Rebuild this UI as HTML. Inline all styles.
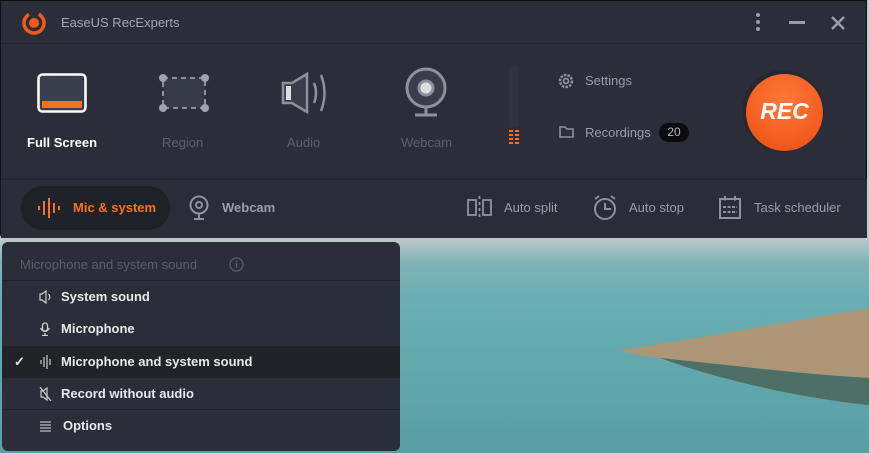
<!DOCTYPE html>
<html><head><meta charset="utf-8"><style>
*{margin:0;padding:0;box-sizing:border-box}
body{width:869px;height:453px;overflow:hidden;position:relative;font-family:"Liberation Sans",sans-serif;background:#5fa0a6}
.bg{position:absolute;left:0;top:0;width:869px;height:453px;background:linear-gradient(180deg,#c9cccd 0px,#c4c8c9 238px,#a9c2c4 246px,#7fb3b8 262px,#6aaeb2 300px,#63a8ad 360px,#5a9ea4 453px)}
.win{position:absolute;left:0;top:0;width:867px;height:238px;background:#2b2e39;border:1px solid #111;border-radius:0 0 4px 4px}
.t{position:absolute;white-space:nowrap}
.menu{position:absolute;left:2px;top:242px;width:398px;height:209px;background:#2b2e39;border-radius:6px;overflow:hidden}
.mi{position:absolute;left:0;width:398px;height:32px;color:#e8e9ec;font-size:13px;font-weight:bold;line-height:32px}
</style></head><body>
<div class="bg"></div>
<svg style="position:absolute;left:600px;top:300px" width="269" height="120"><path d="M20 50 C90 40 170 25 269 8 L269 78 C200 74 120 64 60 58 C40 55 25 53 20 50Z" fill="#ad9676"/><path d="M60 58 C120 64 200 74 269 78 L269 105 C200 98 120 80 60 58Z" fill="#4d6f66"/></svg>
<div class="win">
 <div style="position:absolute;left:0;top:42px;width:866px;height:1px;background:#22242c"></div>
 <div style="position:absolute;left:0;top:177px;width:866px;height:60px;background:#2a2d37;border-top:2px solid #24262f"></div>
 <svg style="position:absolute;left:20px;top:10px" width="26" height="24"><circle cx="13" cy="12" r="10" fill="none" stroke="#f25a1d" stroke-width="3.5" stroke-dasharray="52 10" transform="rotate(-60 13 12)"/><circle cx="13" cy="12" r="5" fill="#f25a1d"/></svg>
 <div class="t" style="left:60px;top:14px;color:#a3a6b0;font-size:13px">EaseUS RecExperts</div>
 <svg style="position:absolute;left:750px;top:12px" width="100" height="20"><g fill="#9a9da8"><circle cx="7" cy="2" r="2"/><circle cx="7" cy="9" r="2"/><circle cx="7" cy="16" r="2"/><rect x="38" y="8" width="16" height="3"/></g><path d="M81 4 L93 16 M93 4 L81 16" stroke="#9a9da8" stroke-width="2.5"/></svg>
 <svg style="position:absolute;left:36px;top:72px" width="51" height="40"><rect x="1.5" y="1.5" width="47" height="37" rx="4" fill="#3a3d4a" stroke="#fff" stroke-width="2.5"/><rect x="5" y="28" width="40" height="7" fill="#f5731e"/></svg>
 <div class="t" style="left:26px;top:134px;color:#fff;font-size:13px;font-weight:bold">Full Screen</div>
 <svg style="position:absolute;left:156px;top:71px" width="54" height="42"><rect x="6" y="6" width="42" height="30" fill="#363947" stroke="#8e909c" stroke-width="2" stroke-dasharray="5 4"/><g fill="#a0a2ad"><circle cx="6" cy="6" r="4"/><circle cx="48" cy="6" r="4"/><circle cx="6" cy="36" r="4"/><circle cx="48" cy="36" r="4"/></g></svg>
 <div class="t" style="left:161px;top:134px;color:#5d606c;font-size:13px">Region</div>
 <svg style="position:absolute;left:279px;top:70px" width="52" height="44"><path d="M3 12 H12 L27 3 V41 L12 32 H3Z" fill="#3a3d4a" stroke="#8e909c" stroke-width="2.5"/><rect x="6" y="15" width="5" height="14" fill="#ddd"/><path d="M34 12 Q38 22 34 32" fill="none" stroke="#8e909c" stroke-width="2.5"/><path d="M41 4 Q48 22 41 40" fill="none" stroke="#8e909c" stroke-width="2.5"/></svg>
 <div class="t" style="left:286px;top:134px;color:#5d606c;font-size:13px">Audio</div>
 <svg style="position:absolute;left:403px;top:66px" width="44" height="50"><circle cx="22" cy="21" r="19" fill="#3a3d4a" stroke="#8e909c" stroke-width="3"/><circle cx="22" cy="21" r="7" fill="#ddd" stroke="#8e909c" stroke-width="3"/><path d="M22 40 V48 M11 48 H33" stroke="#8e909c" stroke-width="3"/></svg>
 <div class="t" style="left:400px;top:134px;color:#5d606c;font-size:13px">Webcam</div>
 <svg style="position:absolute;left:507px;top:66px" width="12" height="80"><g fill="#30333d"><rect x="1" y="0" width="10" height="60"/></g><g fill="#f5731e"><rect x="1" y="63" width="4" height="2"/><rect x="7" y="63" width="4" height="2"/><rect x="1" y="67" width="4" height="2"/><rect x="7" y="67" width="4" height="2"/><rect x="1" y="71" width="4" height="2"/><rect x="7" y="71" width="4" height="2"/><rect x="1" y="75" width="4" height="2"/><rect x="7" y="75" width="4" height="2"/></g></svg>
 <svg style="position:absolute;left:557px;top:72px" width="16" height="16"><circle cx="8" cy="8" r="6" fill="none" stroke="#8e909c" stroke-width="2.5" stroke-dasharray="2.5 1.2"/><circle cx="8" cy="8" r="2.5" fill="none" stroke="#8e909c" stroke-width="1.8"/></svg>
 <div class="t" style="left:584px;top:72px;color:#9a9da8;font-size:13px">Settings</div>
 <svg style="position:absolute;left:558px;top:124px" width="16" height="14"><path d="M1 2 H6 L8 4 H14 V12 H1Z" fill="none" stroke="#8e909c" stroke-width="1.6"/></svg>
 <div class="t" style="left:584px;top:124px;color:#9a9da8;font-size:13px">Recordings</div>
 <div class="t" style="left:658px;top:122px;width:30px;height:19px;background:#0c0c0e;border-radius:10px;color:#bbb;font-size:12px;line-height:19px;text-align:center">20</div>
 <div style="position:absolute;left:741px;top:69px;width:82px;height:82px;border-radius:50%;background:#252731"></div>
 <div style="position:absolute;left:745px;top:73px;width:77px;height:77px;border-radius:50%;background:radial-gradient(circle at 50% 35%,#ff7a3a,#f25a1d 70%,#e04d14)"></div>
 <div class="t" style="left:745px;top:97px;width:77px;text-align:center;color:#fff;font-size:23px;font-weight:bold;font-style:italic">REC</div>
 <div style="position:absolute;left:20px;top:185px;width:149px;height:44px;border-radius:22px;background:#1f2128"></div>
 <svg style="position:absolute;left:36px;top:197px" width="24" height="20"><g stroke="#f5731e" stroke-width="2"><path d="M2 8V12M7 3V17M12 0V20M17 5V15M22 8V12"/></g></svg>
 <div class="t" style="left:72px;top:199px;color:#f5731e;font-size:13px;font-weight:bold">Mic &amp; system</div>
 <svg style="position:absolute;left:186px;top:194px" width="24" height="26"><circle cx="12" cy="10" r="8.5" fill="none" stroke="#8e909c" stroke-width="2"/><circle cx="12" cy="10" r="3" fill="none" stroke="#8e909c" stroke-width="2"/><path d="M12 19V23M7 24H17" stroke="#8e909c" stroke-width="2"/></svg>
 <div class="t" style="left:221px;top:199px;color:#9a9da8;font-size:13px;font-weight:bold">Webcam</div>
 <svg style="position:absolute;left:466px;top:194px" width="26" height="26"><rect x="1" y="5" width="8" height="15" fill="none" stroke="#8e909c" stroke-width="1.8"/><rect x="16" y="5" width="8" height="15" fill="none" stroke="#8e909c" stroke-width="1.8"/><path d="M12.5 1V25" stroke="#8e909c" stroke-width="1.8" stroke-dasharray="3 3"/></svg>
 <div class="t" style="left:503px;top:199px;color:#9a9da8;font-size:13px">Auto split</div>
 <svg style="position:absolute;left:591px;top:194px" width="26" height="26"><circle cx="13" cy="14" r="10" fill="none" stroke="#8e909c" stroke-width="2"/><path d="M13 8V14H19M3 4L7 1M23 4L19 1" stroke="#8e909c" stroke-width="2" fill="none"/></svg>
 <div class="t" style="left:628px;top:199px;color:#9a9da8;font-size:13px">Auto stop</div>
 <svg style="position:absolute;left:717px;top:194px" width="24" height="26"><rect x="2" y="4" width="20" height="19" fill="none" stroke="#8e909c" stroke-width="2"/><path d="M7 1V6M17 1V6M5 12H19M5 17H19" stroke="#8e909c" stroke-width="2" stroke-dasharray="3 1.5"/></svg>
 <div class="t" style="left:753px;top:199px;color:#9a9da8;font-size:13px">Task scheduler</div>
</div>
<div class="menu">
 <div class="t" style="left:18px;top:15px;color:#5a5d69;font-size:13px">Microphone and system sound</div>
 <svg style="position:absolute;left:227px;top:15px" width="15" height="15"><circle cx="7.5" cy="7.5" r="6.5" fill="none" stroke="#5a5d69" stroke-width="1.3"/><path d="M7.5 6V11M7.5 3.5V4.8" stroke="#5a5d69" stroke-width="1.5"/></svg>
 <div style="position:absolute;left:0;top:38px;width:398px;height:1px;background:#22242c"></div>
 <div class="mi" style="top:39px"><svg style="position:absolute;left:37px;top:9px" width="13" height="14"><path d="M1 4H3L7 1V13L3 10H1Z" fill="none" stroke="#ccc" stroke-width="1.2"/><path d="M9.5 4Q12 7 9.5 10" fill="none" stroke="#ccc" stroke-width="1.2"/></svg><span style="position:absolute;left:59px">System sound</span></div>
 <div class="mi" style="top:71px"><svg style="position:absolute;left:37px;top:9px" width="12" height="14"><rect x="3.5" y="1" width="5" height="8" rx="2.5" fill="none" stroke="#ccc" stroke-width="1.3"/><path d="M1.5 6Q6 13 10.5 6M6 11V13.5M3 13.5H9" fill="none" stroke="#ccc" stroke-width="1.3"/></svg><span style="position:absolute;left:59px">Microphone</span></div>
 <div class="mi" style="top:104px;background:#212329"><span style="position:absolute;left:12px;font-size:13px">✓</span><svg style="position:absolute;left:38px;top:9px" width="12" height="14"><path d="M1 5V9M4 2V12M7 0V14M10 4V10" stroke="#ccc" stroke-width="1.2"/></svg><span style="position:absolute;left:59px">Microphone and system sound</span></div>
 <div class="mi" style="top:136px"><svg style="position:absolute;left:37px;top:9px" width="13" height="14"><path d="M2 4H4L8 1V13L4 10H2Z" fill="none" stroke="#ccc" stroke-width="1.2"/><path d="M1 0L12 14" stroke="#ccc" stroke-width="1.2"/></svg><span style="position:absolute;left:59px">Record without audio</span></div>
 <div style="position:absolute;left:0;top:167px;width:398px;height:1px;background:#22242c"></div>
 <div class="mi" style="top:168px"><svg style="position:absolute;left:38px;top:10px" width="12" height="12"><path d="M0 2H11M0 5H11M0 8H11M0 11H11" stroke="#bbb" stroke-width="1.3"/></svg><span style="position:absolute;left:61px">Options</span></div>
</div>
</body></html>
